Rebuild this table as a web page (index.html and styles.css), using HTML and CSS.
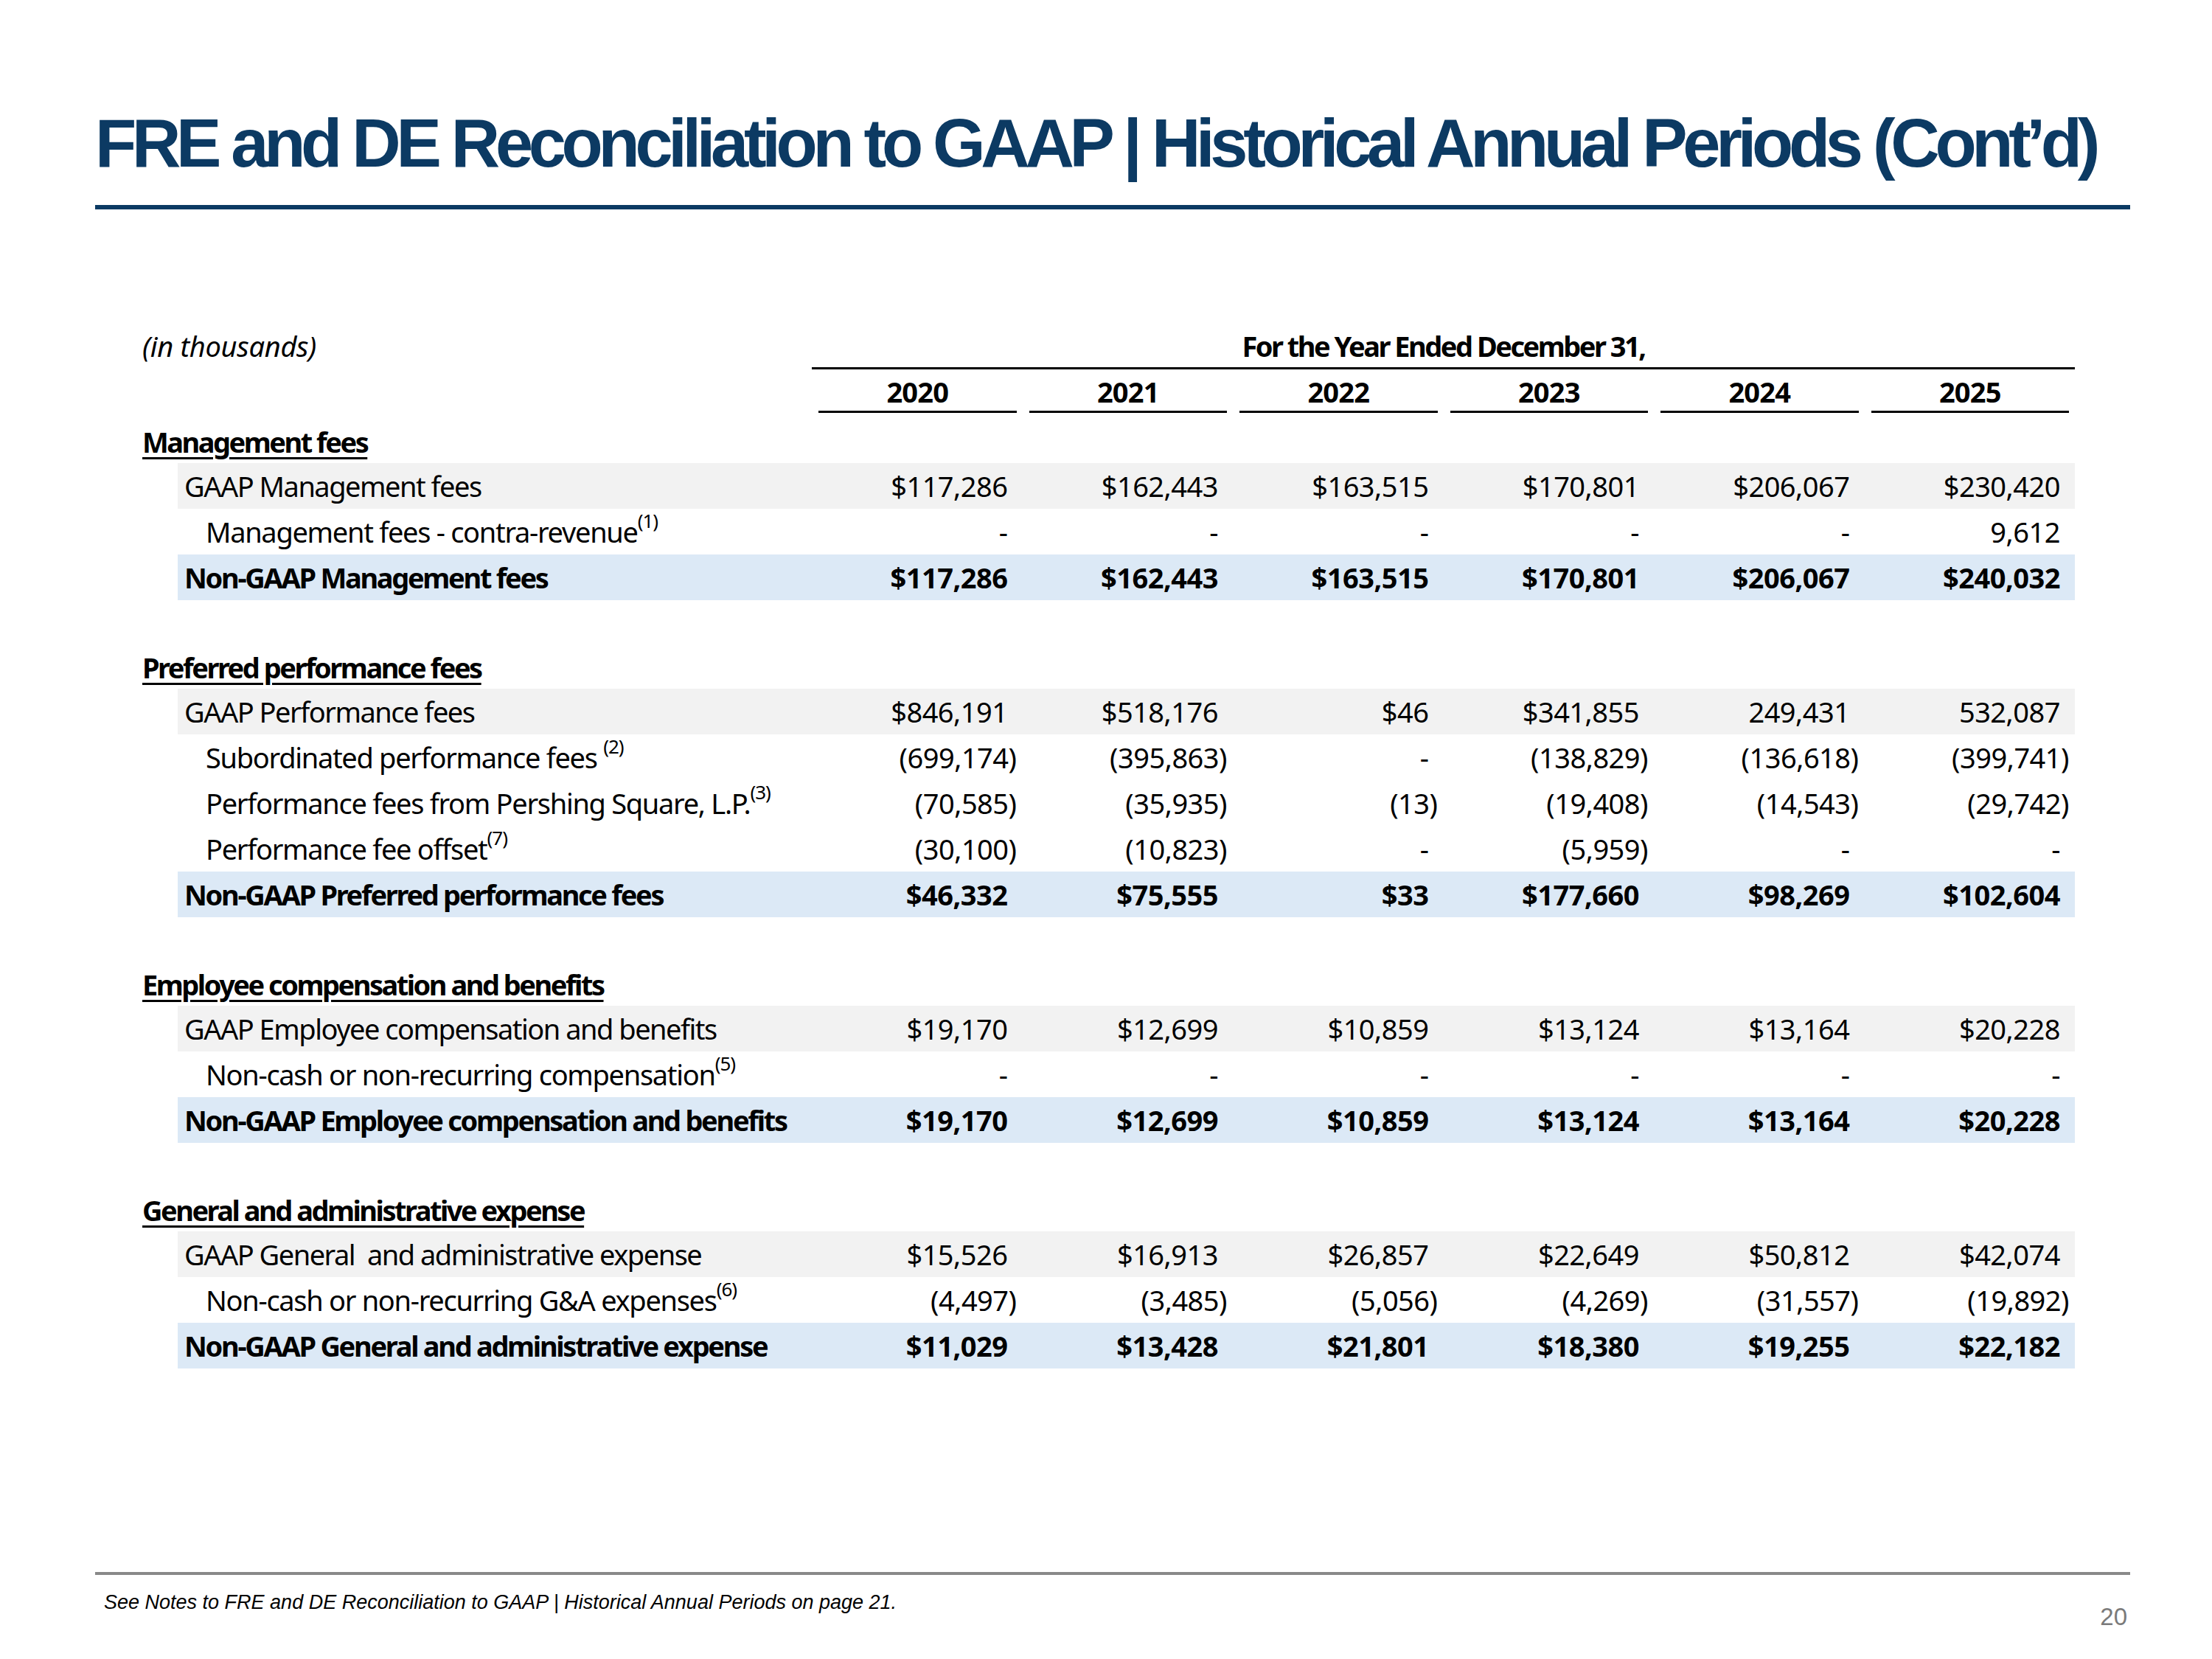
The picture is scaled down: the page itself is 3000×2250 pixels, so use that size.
FILE: index.html
```html
<!DOCTYPE html>
<html lang="en">

<head>
  <meta charset="UTF-8">
  <meta name="viewport" content="width=device-width, initial-scale=1.0">
  <title>FRE and DE Reconciliation to GAAP</title>
  <link rel="stylesheet" href="styles.css">
</head>

<body>
  <div class="slide">
    <header class="titleBlock">
      <h1 class="title">FRE and DE Reconciliation to GAAP | Historical Annual Periods (Cont’d)</h1>
      <div class="titleRule"></div>
    </header>

    <section class="recon">
      <div class="row headTop">
        <div class="units">(in thousands)</div>
        <div class="period">For the Year Ended December 31,</div>
      </div>
      <div class="row years">
        <div></div>
        <div class="year">2020</div>
        <div class="year">2021</div>
        <div class="year">2022</div>
        <div class="year">2023</div>
        <div class="year">2024</div>
        <div class="year">2025</div>
      </div>

      <!-- Management fees -->
      <div class="row section first"><div class="sectionName">Management fees</div></div>
      <div class="row line gaap">
        <div class="label">GAAP Management fees</div>
        <div class="num">$117,286</div>
        <div class="num">$162,443</div>
        <div class="num">$163,515</div>
        <div class="num">$170,801</div>
        <div class="num">$206,067</div>
        <div class="num">$230,420</div>
      </div>
      <div class="row line">
        <div class="label sub">Management fees - contra-revenue<sup>(1)</sup></div>
        <div class="num">-</div>
        <div class="num">-</div>
        <div class="num">-</div>
        <div class="num">-</div>
        <div class="num">-</div>
        <div class="num">9,612</div>
      </div>
      <div class="row line total">
        <div class="label">Non-GAAP Management fees</div>
        <div class="num">$117,286</div>
        <div class="num">$162,443</div>
        <div class="num">$163,515</div>
        <div class="num">$170,801</div>
        <div class="num">$206,067</div>
        <div class="num">$240,032</div>
      </div>

      <!-- Preferred performance fees -->
      <div class="row section"><div class="sectionName">Preferred performance fees</div></div>
      <div class="row line gaap">
        <div class="label">GAAP Performance fees</div>
        <div class="num">$846,191</div>
        <div class="num">$518,176</div>
        <div class="num">$46</div>
        <div class="num">$341,855</div>
        <div class="num">249,431</div>
        <div class="num">532,087</div>
      </div>
      <div class="row line">
        <div class="label sub">Subordinated performance fees <sup>(2)</sup></div>
        <div class="num neg">(699,174)</div>
        <div class="num neg">(395,863)</div>
        <div class="num">-</div>
        <div class="num neg">(138,829)</div>
        <div class="num neg">(136,618)</div>
        <div class="num neg">(399,741)</div>
      </div>
      <div class="row line">
        <div class="label sub">Performance fees from Pershing Square, L.P.<sup>(3)</sup></div>
        <div class="num neg">(70,585)</div>
        <div class="num neg">(35,935)</div>
        <div class="num neg">(13)</div>
        <div class="num neg">(19,408)</div>
        <div class="num neg">(14,543)</div>
        <div class="num neg">(29,742)</div>
      </div>
      <div class="row line">
        <div class="label sub">Performance fee offset<sup>(7)</sup></div>
        <div class="num neg">(30,100)</div>
        <div class="num neg">(10,823)</div>
        <div class="num">-</div>
        <div class="num neg">(5,959)</div>
        <div class="num">-</div>
        <div class="num">-</div>
      </div>
      <div class="row line total">
        <div class="label">Non-GAAP Preferred performance fees</div>
        <div class="num">$46,332</div>
        <div class="num">$75,555</div>
        <div class="num">$33</div>
        <div class="num">$177,660</div>
        <div class="num">$98,269</div>
        <div class="num">$102,604</div>
      </div>

      <!-- Employee compensation -->
      <div class="row section"><div class="sectionName">Employee compensation and benefits</div></div>
      <div class="row line gaap">
        <div class="label">GAAP Employee compensation and benefits</div>
        <div class="num">$19,170</div>
        <div class="num">$12,699</div>
        <div class="num">$10,859</div>
        <div class="num">$13,124</div>
        <div class="num">$13,164</div>
        <div class="num">$20,228</div>
      </div>
      <div class="row line">
        <div class="label sub">Non-cash or non-recurring compensation<sup>(5)</sup></div>
        <div class="num">-</div>
        <div class="num">-</div>
        <div class="num">-</div>
        <div class="num">-</div>
        <div class="num">-</div>
        <div class="num">-</div>
      </div>
      <div class="row line total">
        <div class="label">Non-GAAP Employee compensation and benefits</div>
        <div class="num">$19,170</div>
        <div class="num">$12,699</div>
        <div class="num">$10,859</div>
        <div class="num">$13,124</div>
        <div class="num">$13,164</div>
        <div class="num">$20,228</div>
      </div>

      <!-- General and administrative -->
      <div class="row section"><div class="sectionName">General and administrative expense</div></div>
      <div class="row line gaap">
        <div class="label">GAAP General&nbsp; and administrative expense</div>
        <div class="num">$15,526</div>
        <div class="num">$16,913</div>
        <div class="num">$26,857</div>
        <div class="num">$22,649</div>
        <div class="num">$50,812</div>
        <div class="num">$42,074</div>
      </div>
      <div class="row line">
        <div class="label sub">Non-cash or non-recurring G&amp;A expenses<sup>(6)</sup></div>
        <div class="num neg">(4,497)</div>
        <div class="num neg">(3,485)</div>
        <div class="num neg">(5,056)</div>
        <div class="num neg">(4,269)</div>
        <div class="num neg">(31,557)</div>
        <div class="num neg">(19,892)</div>
      </div>
      <div class="row line total">
        <div class="label">Non-GAAP General and administrative expense</div>
        <div class="num">$11,029</div>
        <div class="num">$13,428</div>
        <div class="num">$21,801</div>
        <div class="num">$18,380</div>
        <div class="num">$19,255</div>
        <div class="num">$22,182</div>
      </div>
    </section>

    <footer class="foot">
      <div class="footRule"></div>
      <div class="footRow">
        <p class="note">See Notes to FRE and DE Reconciliation to GAAP | Historical Annual Periods on page 21.</p>
        <p class="pageNum">20</p>
      </div>
    </footer>
  </div>
</body>

</html>
```

FILE: styles.css
```css
body {
  margin: 0;
  background-color: white;
  font-family: 'Noto Sans', 'Open Sans', sans-serif;
  color: #000;
}

.slide {
  width: 3000px;
  height: 2250px;
  box-sizing: border-box;
  padding: 148px 111px 38px 129px;
  display: flex;
  flex-direction: column;
}

/* title */
.title {
  margin: 0;
  font-family: 'Liberation Sans', Arial, sans-serif;
  font-weight: bold;
  font-size: 92px;
  line-height: 92px;
  letter-spacing: -6.3px;
  color: #0c3a63;
  white-space: nowrap;
}

.titleRule {
  margin-top: 38px;
  height: 6px;
  background-color: #0b3a63;
}

/* table */
.recon {
  margin: 156px 75px 0 64px;
  font-size: 38px;
}

.row {
  display: grid;
  grid-template-columns: 1fr repeat(6, 285.5px);
  align-items: center;
}

.headTop {
  height: 61px;
  align-items: stretch;
}
.units {
  font-style: italic;
  letter-spacing: -0.3px;
  display: flex;
  align-items: center;
  padding-bottom: 3px;
}
.period {
  grid-column: 2 / 8;
  border-bottom: 3px solid #000;
  display: flex;
  align-items: center;
  justify-content: center;
  font-weight: bold;
  letter-spacing: -2.5px;
}

.years {
  height: 59px;
  align-items: stretch;
}
.year {
  margin: 0 8px 0 9px;
  border-bottom: 3px solid #000;
  display: flex;
  align-items: center;
  justify-content: center;
  padding-top: 4px;
  font-weight: bold;
  letter-spacing: -0.8px;
}

.section {
  height: 58px;
  margin-top: 62px;
}
.section.first {
  margin-top: 10px;
}
.sectionName {
  font-weight: bold;
  letter-spacing: -2.5px;
  text-decoration: underline;
  text-decoration-thickness: 3px;
  text-underline-offset: 6px;
  white-space: nowrap;
}

.line {
  height: 62px;
  margin-left: 48px;
}
.line.gaap {
  background-color: #f2f2f2;
}
.line.total {
  background-color: #dce9f6;
  font-weight: bold;
}

.label {
  padding-left: 9px;
  letter-spacing: -1.5px;
  white-space: nowrap;
}
.label.sub {
  padding-left: 38px;
  letter-spacing: -1.3px;
}
.total .label {
  letter-spacing: -2.3px;
}

sup {
  font-size: 26px;
  line-height: 0;
  vertical-align: 20px;
  letter-spacing: -1px;
}

.num {
  text-align: right;
  padding-right: 20px;
  letter-spacing: -0.5px;
  white-space: nowrap;
}
.num.neg {
  padding-right: 8px;
}

/* footer */
.foot {
  margin-top: auto;
}
.footRule {
  height: 4px;
  background-color: #898989;
}
.footRow {
  display: flex;
  justify-content: space-between;
  align-items: flex-start;
  font-family: 'Liberation Sans', Arial, sans-serif;
}
.note {
  margin: 22px 0 0 12px;
  font-size: 27px;
  font-style: italic;
}
.pageNum {
  margin: 38px 4px 0 0;
  font-size: 33px;
  color: #7a7a7a;
}
```
